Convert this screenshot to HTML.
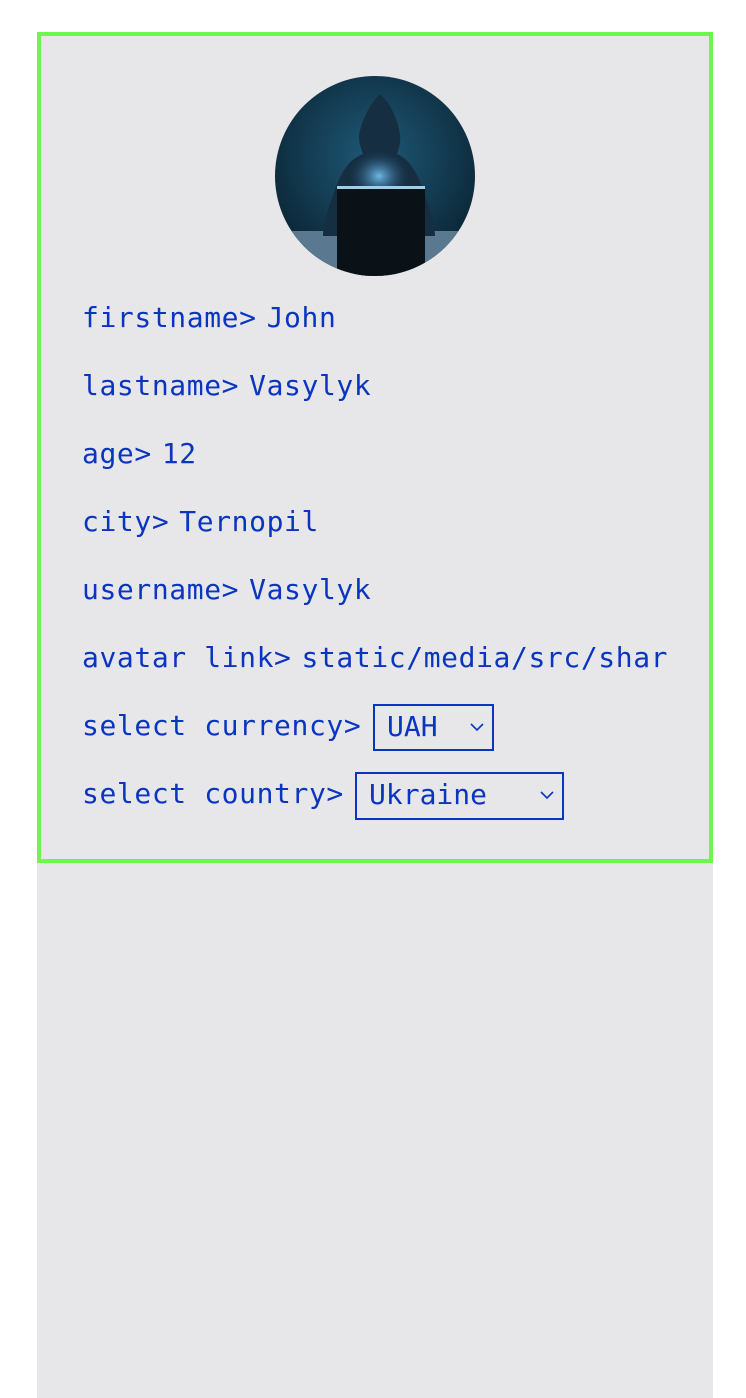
<!DOCTYPE html>
<html><head><style>
html,body{margin:0;padding:0;background:#fff;width:746px;height:1398px;overflow:hidden}
.bg{position:absolute;left:37px;top:32px;width:676px;height:1366px;background:#e7e7ea}
.card{position:absolute;left:37px;top:32px;width:668px;height:823px;border:4px solid #6ef74b}
.row{position:absolute;left:82px;font-family:"DejaVu Sans Mono","Liberation Mono",monospace;font-size:28px;color:#0a35c0;line-height:34px;white-space:nowrap;letter-spacing:0.6px}
.row b{font-weight:normal;margin-left:10px}
.sel{position:absolute;border:2px solid #0a35c0;box-sizing:border-box;font-family:"DejaVu Sans Mono","Liberation Mono",monospace;font-size:28px;color:#0a35c0;line-height:42px;padding-left:12px}
.sel svg{position:absolute;right:8px;top:17px}
</style></head><body>
<div class="bg"></div>
<div class="card"></div>
<svg style="position:absolute;left:275px;top:76px" width="200" height="200" viewBox="0 0 200 200">
<defs>
<clipPath id="c"><circle cx="100" cy="100" r="100"/></clipPath>
<radialGradient id="g" cx="0.5" cy="0.4" r="0.6"><stop offset="0" stop-color="#1f5a78"/><stop offset="1" stop-color="#0b2535"/></radialGradient>
<radialGradient id="l" cx="0.5" cy="0.5" r="0.5"><stop offset="0" stop-color="#6fb8e8"/><stop offset="1" stop-color="#1a4a6a" stop-opacity="0"/></radialGradient>
</defs>
<g clip-path="url(#c)">
<rect width="200" height="200" fill="url(#g)"/>
<rect x="0" y="155" width="200" height="45" fill="#5a7890"/>
<path d="M105 18 C95 28 86 45 84 60 C84 68 86 72 88 78 C72 84 64 100 58 120 C52 135 48 150 48 160 L160 160 C160 150 156 135 150 120 C144 100 136 84 122 78 C124 72 126 66 125 58 C122 42 116 28 105 18Z" fill="#162e42"/>
<ellipse cx="104" cy="100" rx="30" ry="25" fill="url(#l)"/>
<rect x="62" y="110" width="88" height="90" fill="#0a1218"/>
<rect x="62" y="110" width="88" height="3" fill="#9fcfe8"/>
</g>
</svg>
<div class="row" style="top:301px">firstname&gt;<b>John</b></div>
<div class="row" style="top:369px">lastname&gt;<b>Vasylyk</b></div>
<div class="row" style="top:437px">age&gt;<b>12</b></div>
<div class="row" style="top:505px">city&gt;<b>Ternopil</b></div>
<div class="row" style="top:573px">username&gt;<b>Vasylyk</b></div>
<div class="row" style="top:641px">avatar link&gt;<b>static/media/src/shar</b></div>
<div class="row" style="top:709px">select currency&gt;</div>
<div class="row" style="top:777px">select country&gt;</div>
<div class="sel" style="left:373px;top:704px;width:121px;height:47px">UAH<svg width="14" height="9" viewBox="0 0 14 9"><path d="M1 1 L7 7 L13 1" fill="none" stroke="#0a35c0" stroke-width="1.6"/></svg></div>
<div class="sel" style="left:355px;top:772px;width:209px;height:48px">Ukraine<svg width="14" height="9" viewBox="0 0 14 9"><path d="M1 1 L7 7 L13 1" fill="none" stroke="#0a35c0" stroke-width="1.6"/></svg></div>
</body></html>
